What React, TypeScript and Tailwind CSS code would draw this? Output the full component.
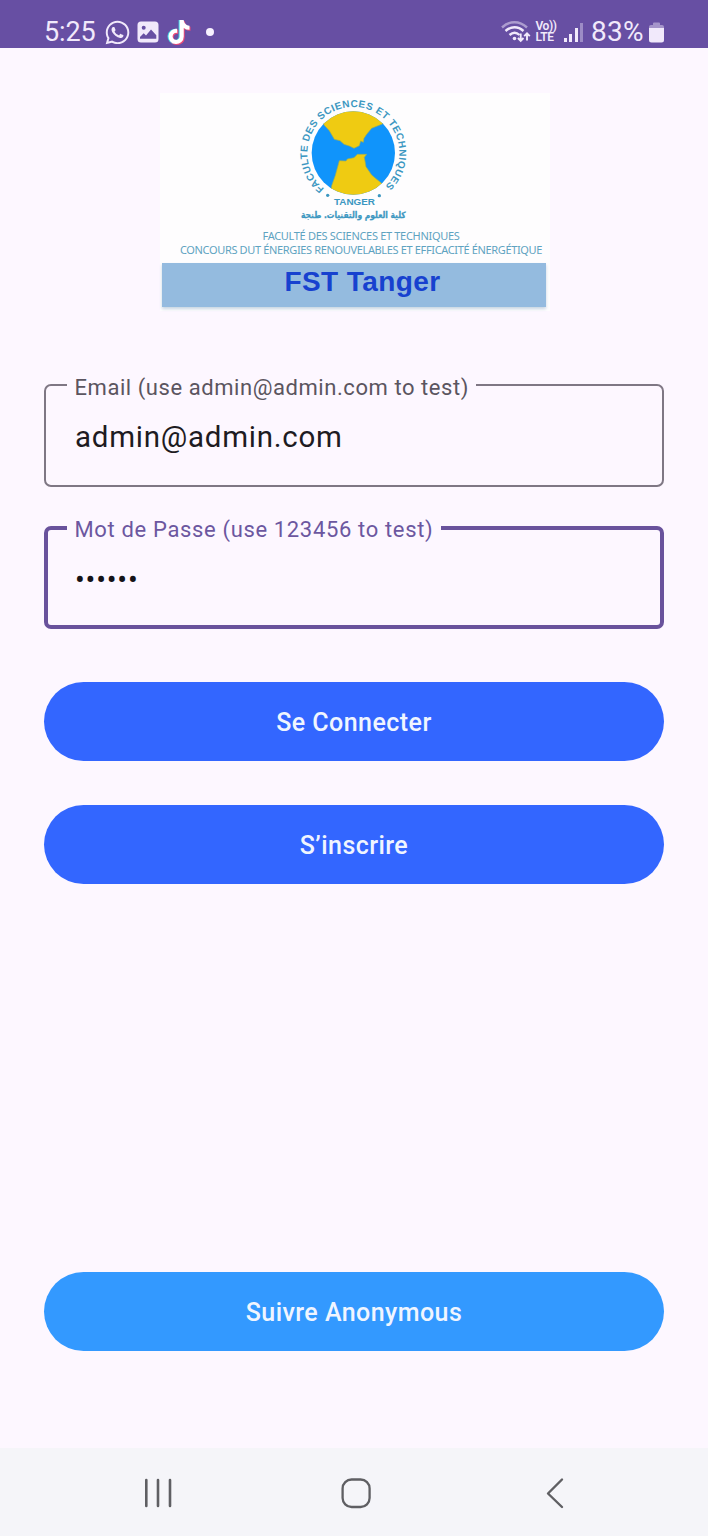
import type { ReactNode } from "react";
import { FaTiktok, FaWhatsapp } from "react-icons/fa";

function StatusBar() {
  return (
    <header className="flex h-12 shrink-0 items-start justify-between bg-[#674fa3] pr-11 pl-11 pt-[14px] text-[#f1e9fb]">
      <div className="flex h-9 items-center">
        <span className="w-[60px] text-[27px] leading-9 tracking-[-0.1px]">5:25</span>
        <FaWhatsapp className="size-[27px]" />
        <svg viewBox="0 0 22 22" className="ml-[6px] size-[22px]">
          <path
            fillRule="evenodd"
            fill="currentColor"
            d="M4 .5h14A3.500 3.500 0 0 1 21.500 4v14a3.500 3.500 0 0 1-3.500 3.500H4A3.500 3.500 0 0 1 .5 18V4A3.500 3.500 0 0 1 4 .5ZM6.700 4.700a2 2 0 1 0 0 4 2 2 0 0 0 0-4ZM3 17.700h16.300v-3.400L14 8.500l-5 6-2.300-2.300L3 16Z"
          />
        </svg>
        <span className="relative ml-2 block h-6 w-[22px]">
          <FaTiktok className="absolute top-0 -left-px size-6 text-[#43d9e6]" />
          <FaTiktok className="absolute top-px left-px size-6 text-[#ee4b78]" />
          <FaTiktok className="absolute top-0 left-0 size-6 text-white" />
        </span>
        <span className="ml-[17px] size-2 rounded-full bg-[#f7f1ff]" />
      </div>
      <div className="flex h-9 items-center">
        <svg viewBox="0 0 30 24" className="h-6 w-[30px]" fill="none" stroke="currentColor" strokeWidth="2.4">
          <path d="M1 7.500C8.500.5 18.500.5 26 7.500" opacity=".5" />
          <path d="M4.500 11c5.500-5 12.500-5 18 0M8.500 15c3.200-2.900 7-2.900 10 0" />
          <circle cx="13.500" cy="18.500" r="1.800" fill="currentColor" stroke="none" />
          <path d="M19.700 13.500v7M16.900 18l2.800 2.800 2.800-2.800M26 20.500v-7M23.200 16.200l2.800-2.800 2.800 2.800" strokeWidth="1.900" />
        </svg>
        <span className="ml-[5px] flex w-[20px] flex-col text-[12px] leading-[11px] font-semibold tracking-[-0.4px]">
          <span className="whitespace-nowrap">Vo))</span>
          <span>LTE</span>
        </span>
        <span className="ml-2 flex h-5 items-end gap-[2.500px]">
          <span className="h-1 w-[3px] bg-current" />
          <span className="h-2 w-[3px] bg-current" />
          <span className="h-[14px] w-[3px] bg-current" />
          <span className="h-[19px] w-[3px] bg-current opacity-40" />
        </span>
        <span className="ml-[8px] w-[56px] text-[28px] leading-9 tracking-[0.3px]">83%</span>
        <svg viewBox="0 0 15 21" className="ml-[2px] h-[21px] w-[15px]">
          <path d="M4 3V1.500Q4 .5 5 .5h5q1 0 1 1V3h2q2 0 2 2v1H0V5q0-2 2-2Z" fill="currentColor" opacity=".45" />
          <path d="M0 6h15v12q0 2.500-2.500 2.500h-10Q0 20.500 0 18Z" fill="currentColor" />
        </svg>
      </div>
    </header>
  );
}

function Emblem() {
  return (
    <svg viewBox="0 15 390 405" className="h-[135px] w-[130px] shrink-0" fontFamily="Liberation Sans, sans-serif" fontWeight="700" fill="#3c97c1">
      <defs>
        <clipPath id="globe">
          <circle cx="190" cy="195" r="125" />
        </clipPath>
        <path id="ring" d="M103.200 302.200A138 138 0 1 1 278.700 300.700" />
      </defs>
      <g clipPath="url(#globe)">
        <rect x="60" y="65" width="260" height="260" fill="#1094fb" />
        <path d="M92 95 104 113 118 128 133 154 150 158 162 169 178 174 192 181 208 173 212 159 220 163 222 151 230 139 245 121 277 108 290 80 190 50Z" fill="#efcb12" stroke="#9cae58" strokeWidth="2" />
        <path d="M120 330 125 293 136 262 148 218 168 219 172 213 192 209 202 199 230 199 223 208 228 236 245 261 258 272 275 286 290 330Z" fill="#efcb12" stroke="#9cae58" strokeWidth="2" />
      </g>
      <text fontSize="30">
        <textPath href="#ring" textLength="667" lengthAdjust="spacing">
          FACULTE DES SCIENCES ET TECHNIQUES
        </textPath>
      </text>
      <circle cx="113" cy="322" r="5" />
      <circle cx="268" cy="323" r="5" />
      <text x="132" y="351" fontSize="29" textLength="123" lengthAdjust="spacingAndGlyphs">TANGER</text>
      <text x="190" y="391" fontSize="26" textAnchor="middle" fontFamily="DejaVu Sans, sans-serif" direction="rtl" textLength="314" lengthAdjust="spacingAndGlyphs" stroke="#3c97c1" strokeWidth="0.8">
        كلية العلوم والتقنيات. طنجة
      </text>
    </svg>
  );
}

function SchoolBanner() {
  return (
    <section className="mt-[45px] ml-[160px] flex h-[218px] w-[390px] shrink-0 flex-col items-center bg-[#fefdfe]">
      <Emblem />
      <div className="flex flex-col items-center pl-[12px] font-['Noto_Sans',sans-serif] text-[11px] leading-[14px] whitespace-nowrap text-[#5fa3c1]">
        <p className="mt-px tracking-[-0.31px]">FACULTÉ DES SCIENCES ET TECHNIQUES</p>
        <p className="tracking-[-0.35px]">CONCOURS DUT ÉNERGIES RENOUVELABLES ET EFFICACITÉ ÉNERGÉTIQUE</p>
      </div>
      <div className="mt-[6px] mr-0.5 flex h-[44px] w-[384px] items-start justify-center bg-[#94bbdf] pl-[17px] shadow-[0_2px_3px_#c6d5e2]">
        <span className="pt-[3px] font-['Liberation_Sans',sans-serif] text-[28px] leading-8 font-bold tracking-[0.4px] text-[#1741cf]">FST Tanger</span>
      </div>
    </section>
  );
}

function OutlinedField({ label, active, children }: { label: string; active?: boolean; children: ReactNode }) {
  return (
    <fieldset
      className={
        active
          ? "h-[117px] rounded-[7px] border-[4px] border-[#69529c] pl-[19px]"
          : "h-[118px] rounded-[7px] border-2 border-[#7f7784] pl-[21px]"
      }
    >
      <legend
        className={
          active
            ? "px-[7.500px] pt-[5px] text-[22px] leading-[26px] tracking-[0.65px] text-[#6c57a0]"
            : "px-[7.500px] pt-[6px] text-[22px] leading-[26px] tracking-[0.56px] text-[#5b5560]"
        }
      >
        {label}
      </legend>
      <div className="pl-2">{children}</div>
    </fieldset>
  );
}

function PillButton({ className, children }: { className: string; children: ReactNode }) {
  return (
    <button className={`flex h-[79px] w-full shrink-0 items-center justify-center rounded-full pt-[3px] text-[25px] font-medium tracking-[0.45px] text-[#f0f5ff] ${className}`}>
      {children}
    </button>
  );
}

function NavigationBar() {
  return (
    <nav className="flex h-[88px] shrink-0 items-center justify-between bg-[#f5f5f9] pt-[2px] pr-[142px] pl-[142px] text-[#5f5f63]">
      <svg viewBox="0 0 32 32" className="size-8" stroke="currentColor" strokeWidth="2.600" strokeLinecap="round">
        <path d="M4.300 3v26M16 3v26M28 3v26" />
      </svg>
      <svg viewBox="0 0 32 32" className="ml-[3px] size-8" fill="none" stroke="currentColor" strokeWidth="2.300">
        <rect x="2.600" y="2.500" width="27" height="27.500" rx="9" />
      </svg>
      <svg viewBox="0 0 32 32" className="size-8" fill="none" stroke="currentColor" strokeWidth="2.400" strokeLinecap="round" strokeLinejoin="round">
        <path d="M28 2.500 14 16.500 28 30" />
      </svg>
    </nav>
  );
}

export default function App() {
  return (
    <div className="flex h-[1536px] w-[708px] flex-col overflow-hidden bg-[#fdf7ff] font-[Roboto,sans-serif]">
      <StatusBar />
      <SchoolBanner />
      <main className="flex grow flex-col px-11 pt-[58px]">
        <OutlinedField label="Email (use admin@admin.com to test)">
          <p className="pt-[18px] text-[29.500px] leading-9 tracking-[0.75px] text-[#1e1b22]">admin@admin.com</p>
        </OutlinedField>
        <div className="mt-[25px]">
          <OutlinedField label="Mot de Passe (use 123456 to test)" active>
            <p className="pt-[19px] text-[29px] leading-9 tracking-[0.8px] text-[#151318]">••••••</p>
          </OutlinedField>
        </div>
        <PillButton className="mt-[53px] bg-[#3366ff]">Se Connecter</PillButton>
        <PillButton className="mt-[44px] bg-[#3366ff]">S’inscrire</PillButton>
        <PillButton className="mt-auto mb-[97px] bg-[#3399ff]">Suivre Anonymous</PillButton>
      </main>
      <NavigationBar />
    </div>
  );
}
